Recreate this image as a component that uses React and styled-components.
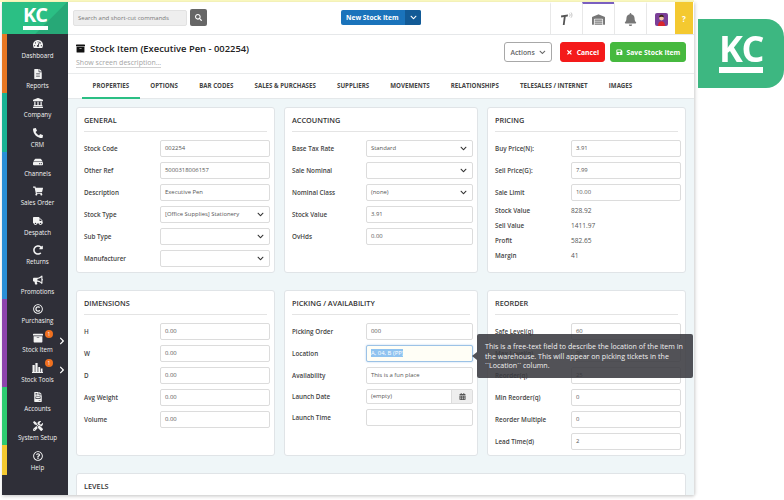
import React from 'react';
import styled, { createGlobalStyle } from 'styled-components';
import {
  FaArchive,
  FaBell,
  FaBullhorn,
  FaCalendarAlt,
  FaChevronDown,
  FaChevronRight,
  FaFileAlt,
  FaFileInvoice,
  FaHdd,
  FaLandmark,
  FaPhoneAlt,
  FaRedoAlt,
  FaRegCopyright,
  FaRegQuestionCircle,
  FaSave,
  FaSearch,
  FaShoppingCart,
  FaTachometerAlt,
  FaTimes,
  FaTools,
  FaTruck,
  FaWarehouse,
} from 'react-icons/fa';

const GlobalStyle = createGlobalStyle`
  html, body {
    margin: 0;
    padding: 0;
    background: #fff;
    overflow: hidden;
  }
  body {
    font-family: "Open Sans", "Liberation Sans", sans-serif;
    color: #444;
  }
  * {
    box-sizing: border-box;
  }
`;

const Page = styled.div`
  width: 784px;
  height: 500px;
  display: flex;
  align-items: flex-start;
  overflow: hidden;
  filter: blur(0.3px);
`;

const Left = styled.div`
  width: 694px;
  flex: none;
`;

const TopStrip = styled.div`
  height: 2px;
  background: #fdfbc0;
`;

const Frame = styled.div`
  margin-left: 2px;
  height: 493px;
  display: flex;
  box-shadow: 0 2px 3px rgba(0, 0, 0, 0.14), 2px 0 3px rgba(0, 0, 0, 0.1);
`;

const Sidebar = styled.aside`
  width: 66px;
  flex: none;
  display: flex;
  flex-direction: column;
  background: #2f2f38;
`;

const Logo = styled.div`
  height: 32px;
  flex: none;
  display: flex;
  flex-direction: column;
  align-items: center;
  padding-top: 3px;
  background: linear-gradient(135deg, #2bbf84 66%, #27a877 67%);
  color: #fff;
`;

const LogoText = styled.span`
  font-family: "Open Sans", sans-serif;
  font-weight: 700;
  font-size: ${(p) => (p.$big ? '36px' : '20px')};
  line-height: ${(p) => (p.$big ? '30px' : '20px')};
  letter-spacing: ${(p) => (p.$big ? '-1.5px' : '-1px')};
`;

const LogoBar = styled.span`
  display: block;
  width: ${(p) => (p.$big ? '44px' : '25px')};
  height: ${(p) => (p.$big ? '6px' : '4px')};
  margin-top: ${(p) => (p.$big ? '3px' : '1px')};
  background: #fff;
`;

const NavList = styled.nav`
  display: flex;
  flex-direction: column;
`;

const NavItem = styled.div`
  position: relative;
  height: 29.4px;
  display: flex;
  flex-direction: column;
  align-items: center;
  justify-content: flex-end;
  padding-bottom: 3px;
  border-left: 5px solid ${(p) => p.$color};
  color: #f2f2f2;
`;

const NavIcon = styled.span`
  height: 12px;
  display: flex;
  align-items: center;
  font-size: ${(p) => p.$size || 10}px;
`;

const NavLabel = styled.span`
  font-size: 6.2px;
  line-height: 9px;
  font-weight: 400;
  margin-top: 1px;
  white-space: nowrap;
`;

const Badge = styled.span`
  position: absolute;
  top: 2px;
  left: 38px;
  width: 8px;
  height: 8px;
  border-radius: 50%;
  background: #f0701f;
  color: #fff;
  font-size: 5px;
  line-height: 8px;
  text-align: center;
`;

const NavArrow = styled.span`
  position: absolute;
  top: 9px;
  right: 2px;
  display: flex;
  font-size: 8px;
  color: #fff;
`;

const Main = styled.main`
  flex: 1;
  min-width: 0;
  display: flex;
  flex-direction: column;
  background: #fff;
`;

const TopBar = styled.header`
  height: 33px;
  flex: none;
  display: flex;
  align-items: stretch;
  border-bottom: 1px solid #e6e8ea;
`;

const SearchArea = styled.div`
  width: 273px;
  flex: none;
  display: flex;
  align-items: center;
  gap: 3px;
  padding: 0 0 1px 5px;
`;

const SearchInput = styled.div`
  width: 114px;
  height: 16px;
  padding-left: 4px;
  border: 1px solid #e2e2e2;
  border-radius: 2px;
  background: #eeeeee;
  color: #777;
  font-size: 6px;
  line-height: 14px;
  white-space: nowrap;
`;

const SearchButton = styled.div`
  width: 17px;
  height: 17px;
  display: flex;
  align-items: center;
  justify-content: center;
  border-radius: 2px;
  background: #666;
  color: #fff;
  font-size: 7px;
`;

const NewArea = styled.div`
  width: 209px;
  flex: none;
  display: flex;
  align-items: flex-start;
  padding-top: 8px;
`;

const NewButton = styled.div`
  width: 80px;
  height: 15px;
  display: flex;
  border-radius: 2px;
  overflow: hidden;
  background: #1a73bb;
  color: #fff;
  font-size: 6.7px;
  font-weight: 700;
  line-height: 15px;
`;

const NewLabel = styled.span`
  flex: 1;
  padding-left: 5px;
  white-space: nowrap;
`;

const NewCaret = styled.span`
  width: 16px;
  display: flex;
  align-items: center;
  justify-content: center;
  background: #125a96;
  font-size: 7px;
`;

const TopCell = styled.div`
  width: ${(p) => p.$w || 32}px;
  flex: none;
  display: flex;
  align-items: center;
  justify-content: center;
  border-left: 1px solid #e8e8e8;
  border-top: 2px solid ${(p) => (p.$active ? '#7a5fc0' : 'transparent')};
  color: #777;
  font-size: 13px;
`;

const HelpCell = styled(TopCell)`
  width: 18px;
  border: none;
  background: #f4c930;
  color: #fff;
  font-size: 8px;
  font-weight: 700;
`;

const PageHead = styled.div`
  height: 39px;
  flex: none;
  display: flex;
  align-items: flex-start;
  justify-content: space-between;
  padding: 7px 8px 0;
  border-bottom: 1px solid #e9ebec;
`;

const TitleLine = styled.div`
  display: flex;
  align-items: center;
  gap: 5px;
  height: 12px;
  font-size: 9.4px;
  font-weight: 600;
  color: #222;
  white-space: nowrap;
`;

const TitleIcon = styled.span`
  display: flex;
  font-size: 9px;
  color: #111;
`;

const Describe = styled.a`
  display: block;
  width: fit-content;
  margin-top: 4px;
  font-size: 7px;
  line-height: 9px;
  color: #a5a5a5;
  border-bottom: 1px solid #d0d0d0;
`;

const HeadActions = styled.div`
  display: flex;
  gap: 5px;
`;

const ActionButton = styled.div`
  height: 20px;
  display: flex;
  align-items: center;
  justify-content: center;
  gap: 4px;
  width: ${(p) => p.$w}px;
  margin-right: ${(p) => p.$mr || 0}px;
  border: 1px solid ${(p) => p.$border || p.$bg};
  border-radius: 3px;
  background: ${(p) => p.$bg};
  color: ${(p) => p.$color || '#fff'};
  font-size: 6.8px;
  font-weight: 700;
  white-space: nowrap;
`;

const ActionsLabel = styled.span`
  font-weight: 600;
`;

const Tabs = styled.div`
  height: 25px;
  flex: none;
  display: flex;
  padding-left: 14px;
  border-bottom: 1px solid #e4e8ea;
`;

const Tab = styled.div`
  height: 25px;
  padding: 0 10.6px;
  font-size: 6.15px;
  font-weight: 700;
  line-height: 24px;
  color: #444;
  white-space: nowrap;
  border-bottom: 2px solid ${(p) => (p.$active ? '#2bbf84' : 'transparent')};
`;

const Content = styled.div`
  flex: 1;
  min-height: 0;
  overflow: hidden;
  display: grid;
  grid-template-columns: 199px 194px 199px;
  grid-auto-rows: 166px;
  gap: 17px 9px;
  padding: 8px 8px 0;
  background: #eff6f8;
`;

const Card = styled.section`
  --label: ${(p) => p.$label || 76}px;
  border: 1px solid #e0e4e7;
  border-radius: 3px;
  background: #fff;
  padding: 0 4px 0 7px;
`;

const WideCard = styled(Card)`
  grid-column: 1 / -1;
`;

const CardTitle = styled.h3`
  margin: 0 3px 5px 0;
  height: 24px;
  font-size: 7.3px;
  font-weight: 600;
  line-height: 24px;
  color: #333;
  border-bottom: 1px solid #e4e4e4;
`;

const Row = styled.div`
  height: ${(p) => (p.$compact ? 20 : p.$stat ? 15 : 22)}px;
  display: grid;
  grid-template-columns: var(--label) 1fr;
  align-items: center;
`;

const Label = styled.label`
  font-size: 6.3px;
  font-weight: 600;
  color: #444;
  white-space: nowrap;
`;

const Value = styled.span`
  font-size: 6.6px;
  color: #555;
`;

const Field = styled.div`
  position: relative;
  height: ${(p) => (p.$compact ? 15 : 17)}px;
  display: flex;
  align-items: center;
  justify-content: space-between;
  padding-left: 4px;
  border: 1px solid ${(p) => (p.$focus ? '#9cc2e6' : '#dcdcdc')};
  border-radius: 2px;
  background: ${(p) => (p.$focus ? '#fffef6' : '#fff')};
  box-shadow: ${(p) => (p.$focus ? '0 0 2px rgba(100,160,220,.5)' : 'none')};
  color: #555;
  font-size: 5.9px;
  white-space: nowrap;
`;

const Caret = styled.span`
  display: flex;
  margin-right: 5px;
  font-size: 7px;
  color: #333;
`;

const Addon = styled.span`
  width: 21px;
  height: 100%;
  display: flex;
  align-items: center;
  justify-content: center;
  border-left: 1px solid #dcdcdc;
  background: #eeeeee;
  color: #555;
  font-size: 7px;
`;

const Selected = styled.span`
  background: #8fc3f0;
  color: #fff;
`;

const Tooltip = styled.div`
  position: absolute;
  z-index: 5;
  top: -12px;
  left: calc(100% + 5px);
  width: 216px;
  height: 44px;
  padding: 8.5px 6px 0 8px;
  border-radius: 2px;
  background: rgba(58, 58, 64, 0.88);
  color: #f1f1f1;
  font-size: 7.1px;
  line-height: 9.7px;
  white-space: normal;

  &::before {
    content: '';
    position: absolute;
    top: 18px;
    left: -5px;
    border-style: solid;
    border-width: 4px 5px 4px 0;
    border-color: transparent rgba(58, 58, 64, 0.88) transparent transparent;
  }
`;

const SideLogo = styled.div`
  width: 86px;
  height: 69px;
  flex: none;
  margin: 19px 0 0 4px;
  display: flex;
  flex-direction: column;
  align-items: center;
  padding-top: 15px;
  background: #3db781;
  border-radius: 0 18px 18px 0;
  color: #fff;
`;

const Scanner = () => (
  <svg width="16" height="16" viewBox="0 0 16 16" fill="none">
    <path d="M2 4.5l7-1-.3 2-2 .3L5.6 14H3.8l1-7.9-2.6.4z" fill="#555" />
    <path d="M10.5 2.5c.8 1 .8 2.2 0 3.2M12 1.5c1.3 1.6 1.3 3.6 0 5.2" stroke="#b5b5b5" strokeWidth="0.8" />
  </svg>
);

const Avatar = () => (
  <svg width="13" height="13" viewBox="0 0 13 13">
    <rect width="13" height="13" rx="2" fill="#7b3f98" />
    <circle cx="6.5" cy="5" r="2.4" fill="#f1c9a8" />
    <path d="M4 4.5C4 2.6 5 1.8 6.5 1.8S9 2.6 9 4.5C8 3.6 5 3.6 4 4.5z" fill="#3a2416" />
    <path d="M3 13c0-3 1.4-4.8 3.5-4.8S10 10 10 13z" fill="#d8262e" />
  </svg>
);

const Bars = () => (
  <svg width="11" height="10" viewBox="0 0 11 10" fill="currentColor">
    <rect x="0.5" y="2" width="2.2" height="7" />
    <rect x="3.4" y="0" width="2.2" height="9" />
    <rect x="6.3" y="4" width="1.8" height="5" />
    <rect x="8.7" y="5.5" width="1.8" height="3.5" />
    <rect y="9" width="11" height="1" />
  </svg>
);

const NAV = [
  { label: 'Dashboard', icon: <FaTachometerAlt />, color: '#e87722' },
  { label: 'Reports', icon: <FaFileAlt />, color: '#e87722' },
  { label: 'Company', icon: <FaLandmark />, color: '#19b394' },
  { label: 'CRM', icon: <FaPhoneAlt />, color: '#19b394' },
  { label: 'Channels', icon: <FaHdd />, color: '#2a8fd6' },
  { label: 'Sales Order', icon: <FaShoppingCart />, color: '#2a8fd6' },
  { label: 'Despatch', icon: <FaTruck />, color: '#2a8fd6' },
  { label: 'Returns', icon: <FaRedoAlt />, color: '#2a8fd6' },
  { label: 'Promotions', icon: <FaBullhorn />, color: '#2a8fd6' },
  { label: 'Purchasing', icon: <FaRegCopyright />, color: '#8e44ad' },
  { label: 'Stock Item', icon: <FaArchive />, color: '#8e44ad', badge: true },
  { label: 'Stock Tools', icon: <Bars />, color: '#8e44ad', badge: true },
  { label: 'Accounts', icon: <FaFileInvoice />, color: '#2ecc71' },
  { label: 'System Setup', icon: <FaTools />, color: '#2ecc71' },
  { label: 'Help', icon: <FaRegQuestionCircle />, color: '#f4c930' },
];

const TABS = [
  'PROPERTIES',
  'OPTIONS',
  'BAR CODES',
  'SALES & PURCHASES',
  'SUPPLIERS',
  'MOVEMENTS',
  'RELATIONSHIPS',
  'TELESALES / INTERNET',
  'IMAGES',
];

const Select = ({ children }) => (
  <Field>
    <span>{children}</span>
    <Caret>
      <FaChevronDown />
    </Caret>
  </Field>
);

const TextRow = ({ label, value }) => (
  <Row>
    <Label>{label}</Label>
    <Field>{value}</Field>
  </Row>
);

const SelectRow = ({ label, value }) => (
  <Row>
    <Label>{label}</Label>
    <Select>{value}</Select>
  </Row>
);

const StatRow = ({ label, value }) => (
  <Row $stat>
    <Label>{label}</Label>
    <Value>{value}</Value>
  </Row>
);

export default function App() {
  return (
    <Page>
      <GlobalStyle />
      <Left>
        <TopStrip />
        <Frame>
          <Sidebar>
            <Logo>
              <LogoText>KC</LogoText>
              <LogoBar />
            </Logo>
            <NavList>
              {NAV.map((item) => (
                <NavItem key={item.label} $color={item.color}>
                  <NavIcon>{item.icon}</NavIcon>
                  <NavLabel>{item.label}</NavLabel>
                  {item.badge && <Badge>1</Badge>}
                  {item.badge && (
                    <NavArrow>
                      <FaChevronRight />
                    </NavArrow>
                  )}
                </NavItem>
              ))}
            </NavList>
          </Sidebar>
          <Main>
            <TopBar>
              <SearchArea>
                <SearchInput>Search and short-cut commands</SearchInput>
                <SearchButton>
                  <FaSearch />
                </SearchButton>
              </SearchArea>
              <NewArea>
                <NewButton>
                  <NewLabel>New Stock Item</NewLabel>
                  <NewCaret>
                    <FaChevronDown />
                  </NewCaret>
                </NewButton>
              </NewArea>
              <TopCell>
                <Scanner />
              </TopCell>
              <TopCell $active>
                <FaWarehouse />
              </TopCell>
              <TopCell>
                <FaBell />
              </TopCell>
              <TopCell $w={29}>
                <Avatar />
              </TopCell>
              <HelpCell>?</HelpCell>
            </TopBar>
            <PageHead>
              <div>
                <TitleLine>
                  <TitleIcon>
                    <FaArchive />
                  </TitleIcon>
                  Stock Item (Executive Pen - 002254)
                </TitleLine>
                <Describe>Show screen description...</Describe>
              </div>
              <HeadActions>
                <ActionButton $w={48} $mr={3} $bg="#fff" $border="#a8a8a8" $color="#666">
                  <ActionsLabel>Actions</ActionsLabel>
                  <FaChevronDown />
                </ActionButton>
                <ActionButton $w={45} $bg="#f41a1a">
                  <FaTimes />
                  Cancel
                </ActionButton>
                <ActionButton $w={76} $bg="#46b93f">
                  <FaSave />
                  Save Stock Item
                </ActionButton>
              </HeadActions>
            </PageHead>
            <Tabs>
              {TABS.map((tab, i) => (
                <Tab key={tab} $active={i === 0}>
                  {tab}
                </Tab>
              ))}
            </Tabs>
            <Content>
              <Card>
                <CardTitle>GENERAL</CardTitle>
                <TextRow label="Stock Code" value="002254" />
                <TextRow label="Other Ref" value="5000318006157" />
                <TextRow label="Description" value="Executive Pen" />
                <SelectRow label="Stock Type" value="[Office Supplies] Stationery" />
                <SelectRow label="Sub Type" />
                <SelectRow label="Manufacturer" />
              </Card>
              <Card $label={74}>
                <CardTitle>ACCOUNTING</CardTitle>
                <SelectRow label="Base Tax Rate" value="Standard" />
                <SelectRow label="Sale Nominal" />
                <SelectRow label="Nominal Class" value="(none)" />
                <TextRow label="Stock Value" value="3.91" />
                <TextRow label="OvHds" value="0.00" />
              </Card>
              <Card $label={76}>
                <CardTitle>PRICING</CardTitle>
                <TextRow label="Buy Price(N):" value="3.91" />
                <TextRow label="Sell Price(G):" value="7.99" />
                <TextRow label="Sale Limit" value="10.00" />
                <StatRow label="Stock Value" value="828.92" />
                <StatRow label="Sell Value" value="1411.97" />
                <StatRow label="Profit" value="582.65" />
                <StatRow label="Margin" value="41" />
              </Card>
              <Card>
                <CardTitle>DIMENSIONS</CardTitle>
                <TextRow label="H" value="0.00" />
                <TextRow label="W" value="0.00" />
                <TextRow label="D" value="0.00" />
                <TextRow label="Avg Weight" value="0.00" />
                <TextRow label="Volume" value="0.00" />
              </Card>
              <Card $label={74}>
                <CardTitle>PICKING / AVAILABILITY</CardTitle>
                <TextRow label="Picking Order" value="000" />
                <Row>
                  <Label>Location</Label>
                  <Field $focus>
                    <Selected>A, 04, B (PP)</Selected>
                    <Tooltip>
                      This is a free-text field to describe the location of the item in the warehouse. This will
                      appear on picking tickets in the ``Location`` column.
                    </Tooltip>
                  </Field>
                </Row>
                <TextRow label="Availability" value="This is a fun place" />
                <Row $compact>
                  <Label>Launch Date</Label>
                  <Field $compact>
                    <span>(empty)</span>
                    <Addon>
                      <FaCalendarAlt />
                    </Addon>
                  </Field>
                </Row>
                <TextRow label="Launch Time" />
              </Card>
              <Card $label={76}>
                <CardTitle>REORDER</CardTitle>
                <TextRow label="Safe Level(q)" value="60" />
                <TextRow label="Max Level(q)" value="90" />
                <TextRow label="Reorder(q)" value="25" />
                <TextRow label="Min Reorder(q)" value="0" />
                <TextRow label="Reorder Multiple" value="0" />
                <TextRow label="Lead Time(d)" value="2" />
              </Card>
              <WideCard>
                <CardTitle>LEVELS</CardTitle>
              </WideCard>
            </Content>
          </Main>
        </Frame>
      </Left>
      <SideLogo>
        <LogoText $big>KC</LogoText>
        <LogoBar $big />
      </SideLogo>
    </Page>
  );
}
